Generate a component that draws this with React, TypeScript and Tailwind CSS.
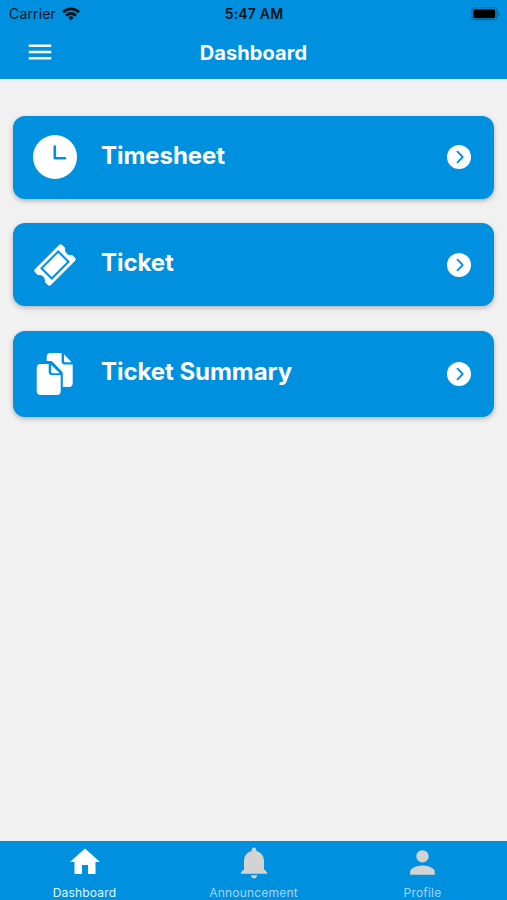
import React from 'react';
import { MdHome, MdMenu, MdPerson } from 'react-icons/md';
import { IoMdNotifications } from 'react-icons/io';

interface MenuCardProps {
  title: string;
  icon: React.ReactNode;
  className?: string;
}

function WifiIcon() {
  return (
    <svg viewBox="0 0 18 14" className="h-[14px] w-[18px]" fill="none" stroke="#07131c" strokeWidth="2.8">
      <path d="M1 5.2a11.4 11.4 0 0 1 16 0" />
      <path d="M4 8.5a7.2 7.2 0 0 1 10 0" />
      <path d="M9 13.5l-2.8-2.9a4 4 0 0 1 5.6 0z" fill="#07131c" stroke="none" />
    </svg>
  );
}

function BatteryIcon() {
  return (
    <svg viewBox="0 0 30 14" className="h-[14px] w-[30px]">
      <rect x="0.7" y="0.7" width="25" height="12" rx="3.5" fill="none" stroke="#0768a2" strokeWidth="1.2" />
      <rect x="2.2" y="2.2" width="22" height="9" rx="1.8" fill="#000" />
      <path d="M27 4.5c2 .8 2 3.6 0 4.4z" fill="#0768a2" />
    </svg>
  );
}

function ClockIcon() {
  return (
    <svg viewBox="0 0 44 44" className="h-11 w-11">
      <circle cx="22" cy="22" r="22" fill="#fff" />
      <path
        d="M21.8 11.500v11.700h10.200"
        fill="none"
        stroke="#0090e0"
        strokeWidth="2.6"
        strokeLinecap="round"
        strokeLinejoin="round"
      />
    </svg>
  );
}

function TicketIcon() {
  return (
    <svg viewBox="0 0 44 44" className="h-11 w-11">
      <g transform="rotate(-45 22 22)">
        <path
          d="M5 10.8h34a2.2 2.2 0 0 1 2.2 2.2v4.2c-3.6 2-3.6 7.6 0 9.6V31a2.2 2.2 0 0 1-2.2 2.2H5A2.2 2.2 0 0 1 2.8 31v-4.2c3.6-2 3.6-7.6 0-9.6V13A2.2 2.2 0 0 1 5 10.8z"
          fill="#fff"
        />
        <rect x="10.2" y="14.7" width="23.6" height="14.6" fill="none" stroke="#0090e0" strokeWidth="2" />
      </g>
    </svg>
  );
}

function DocumentsIcon() {
  return (
    <svg viewBox="0 0 44 44" className="h-11 w-11" fill="#fff">
      {/* back sheet */}
      <path d="M13.7 8.9V5a4 4 0 0 1 4-4H28.6v8.6a2.8 2.8 0 0 0 2.8 2.8h8.3V31a4 4 0 0 1-4 4H29.8V21.5a3 3 0 0 0-.9-2.1L20 10.2a4 4 0 0 0-2.9-1.2z" />
      <path d="M31 2.3l7.7 7.9h-6.5a1.2 1.2 0 0 1-1.2-1.2z" />
      {/* front sheet */}
      <path d="M7.7 12.1h8v8a3 3 0 0 0 3 3h9V39a4 4 0 0 1-4 4h-16a4 4 0 0 1-4-4V16.1a4 4 0 0 1 4-4z" />
      <path d="M18.200 13l8.500 8.200h-7.300a1.200 1.200 0 0 1-1.200-1.200z" />
    </svg>
  );
}

function MenuCard({ title, icon, className = 'h-[83px]' }: MenuCardProps) {
  return (
    <button
      className={`flex w-full items-center rounded-[12px] bg-[#0090e0] pl-[15px] pr-[23px] text-left shadow-[0_2px_5px_rgba(0,0,0,0.26)] ${className}`}>
      <span className="flex w-[54px] justify-center">{icon}</span>
      <span className="ml-[19px] flex-1 pb-[3px] text-[24px] leading-8 font-bold tracking-[-0.05px] text-white">
        {title}
      </span>
      <svg viewBox="0 0 24 24" className="h-6 w-6">
        <circle cx="12" cy="12" r="12" fill="#fff" />
        <path
          d="M10.5 6.7l5.2 5.3-5.2 5.3"
          fill="none"
          stroke="#0090e0"
          strokeWidth="1.8"
          strokeLinecap="round"
          strokeLinejoin="round"
        />
      </svg>
    </button>
  );
}

export default function App() {
  return (
    <div className="flex h-[900px] w-[507px] flex-col overflow-hidden bg-[#f1f1f1] font-['Inter',sans-serif]">
      <header className="h-[79px] bg-[#0090e0]">
        <div className="grid h-[27px] grid-cols-3 items-center pl-[9px] pr-[6px] text-[14px] text-[#07131c]">
          <div className="flex items-center gap-[6px]">
            <span className="tracking-[0.15px]">Carrier</span>
            <WifiIcon />
          </div>
          <span className="pr-[2px] text-center font-semibold tracking-[0.2px]">5:47 AM</span>
          <div className="flex justify-end">
            <BatteryIcon />
          </div>
        </div>
        <div className="grid h-[50px] grid-cols-[80px_1fr_80px] items-center text-white">
          <MdMenu className="ml-[25px] h-[30px] w-[30px]" />
          <h1 className="pt-px text-center text-[20px] font-bold tracking-[0.1px]">Dashboard</h1>
        </div>
      </header>

      <main className="flex flex-1 flex-col gap-[24.5px] px-[13px] pt-[36.5px]">
        <MenuCard title="Timesheet" icon={<ClockIcon />} />
        <MenuCard title="Ticket" icon={<TicketIcon />} />
        <MenuCard title="Ticket Summary" className="h-[86px]" icon={<DocumentsIcon />} />
      </main>

      <nav className="grid h-[59px] grid-cols-3 bg-[#0090e0] text-[12px] tracking-[0.2px] text-[#a9d3ec]">
        <div className="flex flex-col items-center text-[#e4f6ff]">
          <MdHome className="mt-[3px] h-9 w-9 text-white" />
          <span className="mt-[5px] leading-4">Dashboard</span>
        </div>
        <div className="flex flex-col items-center">
          <IoMdNotifications className="mt-[3px] h-[38px] w-[38px] text-[#d3d3d3]" />
          <span className="mt-[3px] leading-4">Announcement</span>
        </div>
        <div className="flex flex-col items-center">
          <MdPerson className="mt-[3px] h-[37px] w-[37px] text-[#d3d3d3]" />
          <span className="mt-1 leading-4">Profile</span>
        </div>
      </nav>
    </div>
  );
}
